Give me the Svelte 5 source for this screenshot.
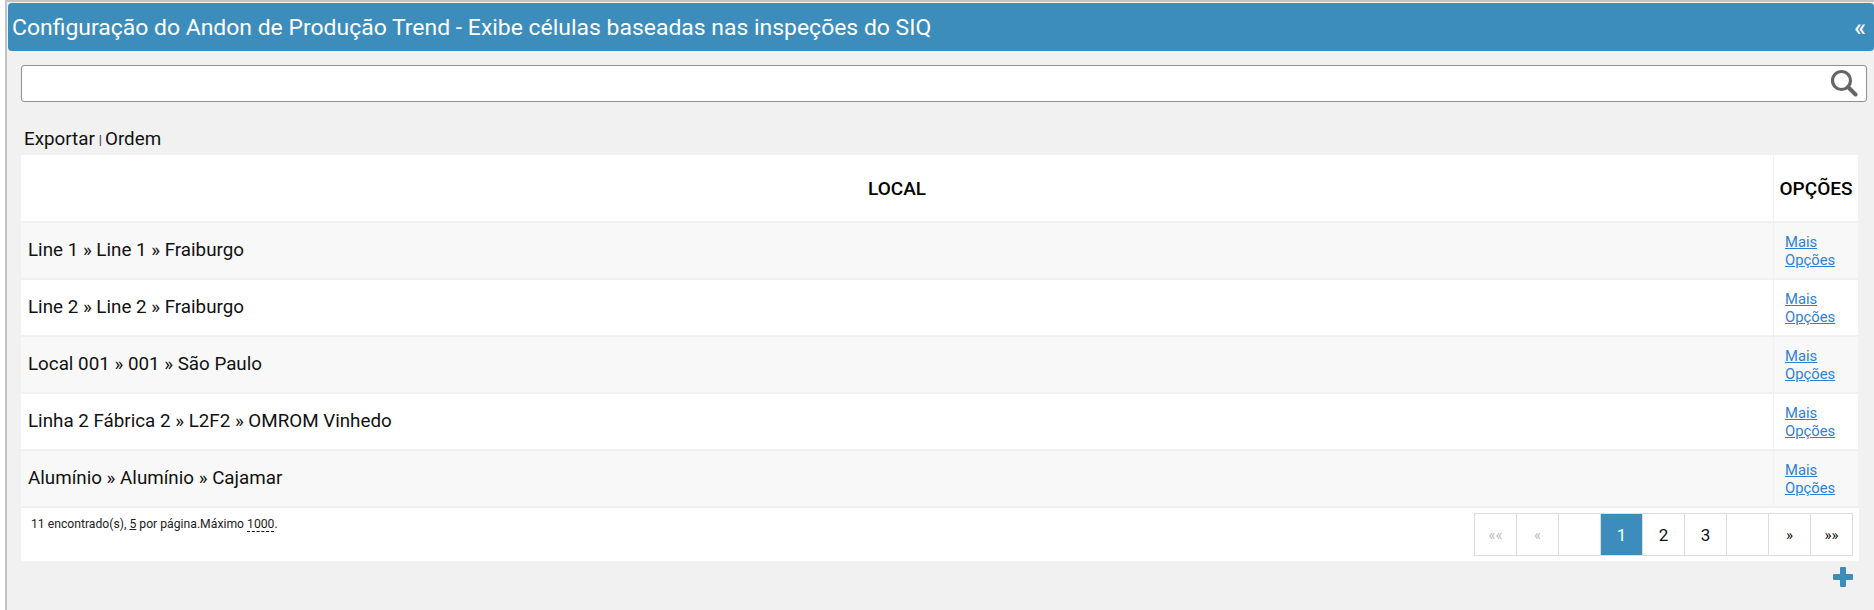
<script>
  const rows = [
    "Line 1 » Line 1 » Fraiburgo",
    "Line 2 » Line 2 » Fraiburgo",
    "Local 001 » 001 » São Paulo",
    "Linha 2 Fábrica 2 » L2F2 » OMROM Vinhedo",
    "Alumínio » Alumínio » Cajamar"
  ];
  const pages = [
    { label: "««", cls: "off" },
    { label: "«", cls: "off" },
    { label: "", cls: "" },
    { label: "1", cls: "on num" },
    { label: "2", cls: "num" },
    { label: "3", cls: "num" },
    { label: "", cls: "" },
    { label: "»", cls: "" },
    { label: "»»", cls: "" }
  ];
</script>

<div class="frame">
  <div class="panel">
    <header class="title">
      <h1>Configuração do Andon de Produção Trend - Exibe células baseadas nas inspeções do SIQ</h1>
      <span class="collapse">«</span>
    </header>

    <div class="body">
      <div class="search">
        <input type="text" />
        <svg class="lens" viewBox="0 0 28 28" width="28" height="28">
          <circle cx="11.5" cy="11.5" r="9" fill="none" stroke="#666" stroke-width="3.2" />
          <path d="M18 18 L25.5 25.5" stroke="#666" stroke-width="4" stroke-linecap="round" />
        </svg>
      </div>

      <div class="tools"><span>Exportar</span><i>|</i><span>Ordem</span></div>

      <table>
        <thead>
          <tr>
            <th class="local">LOCAL</th>
            <th class="opts">OPÇÕES</th>
          </tr>
        </thead>
        <tbody>
          {#each rows as row}
            <tr>
              <td class="local">{row}</td>
              <td class="opts"><a href="#more">Mais Opções</a></td>
            </tr>
          {/each}
        </tbody>
      </table>

      <div class="foot">
        <div class="count">11 encontrado(s), <u>5</u> por página.Máximo <span class="max">1000</span>.</div>
        <div class="pager">
          {#each pages as p}
            <span class="page {p.cls}">{p.label}</span>
          {/each}
        </div>
      </div>

      <div class="add">
        <svg viewBox="0 0 20 20" width="20" height="20">
          <rect x="7" y="0" width="6" height="20" rx="1" fill="#3c8dbc" />
          <rect x="0" y="7" width="20" height="6" rx="1" fill="#3c8dbc" />
        </svg>
      </div>
    </div>
  </div>
</div>

<style>
  :global(body) {
    margin: 0;
    background: #fff;
    font-family: Roboto, "Liberation Sans", sans-serif;
  }
  .frame {
    height: 610px;
    box-sizing: border-box;
    padding-left: 5px;
    overflow: hidden;
  }
  .panel {
    height: 100%;
    box-sizing: border-box;
    background: #f1f1f1;
    border-left: 2px solid #c4c4c4;
    border-top: 2px solid #c4c4c4;
    padding: 1px 0 0 1px;
  }
  .title {
    height: 48px;
    background: #3c8dbc;
    border-radius: 4px;
    color: #fff;
    display: flex;
    align-items: center;
    justify-content: space-between;
    padding: 0 8px 0 4px;
  }
  h1 {
    margin: 0;
    font-size: 22.95px;
    font-weight: 400;
  }
  .collapse {
    font-size: 24px;
    font-weight: 500;
    line-height: 24px;
    padding-top: 2px;
  }
  .body {
    padding: 14px 0 0 13px;
  }
  .search {
    position: relative;
    margin-right: 7px;
  }
  .search input {
    display: block;
    width: 100%;
    height: 37px;
    box-sizing: border-box;
    border: 1px solid #8f8f8f;
    border-radius: 3px;
    background: #fff;
    outline: none;
  }
  .lens {
    position: absolute;
    right: 9px;
    top: 4px;
  }
  .tools {
    margin-top: 26px;
    height: 23px;
    padding-bottom: 4px;
    padding-left: 3px;
    font-size: 18.8px;
    line-height: 23px;
    color: #111;
    display: flex;
    align-items: center;
  }
  .tools i {
    font-style: normal;
    font-size: 13px;
    margin: 0 3px 0 4px;
    color: #333;
  }
  table {
    width: 1837px;
    border-collapse: collapse;
    table-layout: fixed;
  }
  th {
    height: 66px;
    background: #fff;
    font-size: 19px;
    font-weight: 500;
    color: #000;
    border-bottom: 2px solid #f1f1f1;
    padding: 0;
  }
  th.opts,
  td.opts {
    width: 84px;
    border-left: 1px solid #f1f1f1;
  }
  td {
    height: 53px;
    padding: 0;
    font-size: 18.8px;
    color: #111;
    border-bottom: 2px solid #f1f1f1;
  }
  td.local {
    padding: 0 0 2px 7px;
  }
  tbody tr:nth-child(odd) td {
    background: #f8f8f8;
  }
  tbody tr:nth-child(even) td {
    background: #fff;
  }
  td.opts {
    font-size: 14.8px;
    line-height: 18px;
    padding-left: 11px;
    padding-right: 10px;
  }
  td.opts a {
    color: #2f7fd6;
  }
  .foot {
    width: 1838px;
    height: 53px;
    background: #fff;
    display: flex;
    justify-content: space-between;
    box-sizing: border-box;
    padding: 5px 6px 0 10px;
  }
  .count {
    font-size: 12.2px;
    padding-top: 3px;
    color: #222;
    line-height: 16px;
  }
  .max {
    border-bottom: 1px dashed #111;
  }
  .pager {
    display: flex;
    height: 43px;
    border: 1px solid #ddd;
    box-sizing: border-box;
  }
  .page {
    width: 42px;
    box-sizing: border-box;
    display: flex;
    align-items: center;
    justify-content: center;
    font-size: 15px;
    color: #111;
    border-left: 1px solid #ddd;
  }
  .page:first-child {
    border-left: 0;
    width: 41px;
  }
  .num {
    font-size: 17px;
  }
  .off {
    color: #bbb;
  }
  .on {
    background: #3c8dbc;
    color: #fff;
  }
  .add {
    width: 1832px;
    display: flex;
    justify-content: flex-end;
    padding-top: 6px;
  }
</style>
